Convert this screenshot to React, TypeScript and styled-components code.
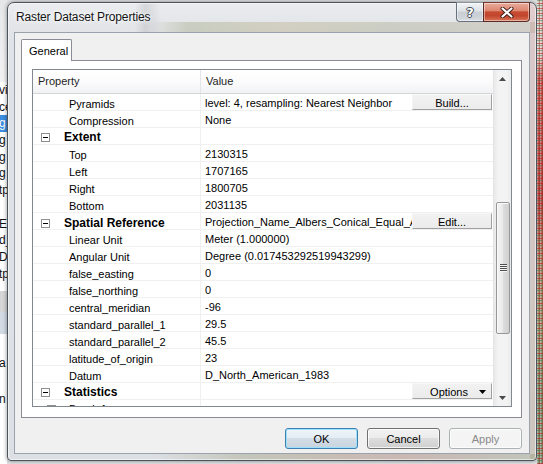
import React from "react";
import styled, { createGlobalStyle } from "styled-components";

const FONT = `"Liberation Sans", Arial, sans-serif`;

const GlobalStyle = createGlobalStyle`
  html, body { margin: 0; padding: 0; }
  body {
    width: 543px; height: 464px; overflow: hidden;
    font-family: ${FONT}; font-size: 11px; color: #000;
  }
  *, *::before, *::after { box-sizing: border-box; }
`;

const Desktop = styled.div`
  display: flex;
  align-items: flex-start;
  width: 543px;
  height: 464px;
  overflow: hidden;
  background: #e2e3e5;
`;

/* ---------- background window strip on the left ---------- */
const LeftStrip = styled.div`
  width: 7px;
  height: 464px;
  flex: none;
  display: flex;
  flex-direction: column;
  overflow: hidden;
  background: #fff;
`;

const StripRow = styled.div<{ $h: number; $bg?: string; $color?: string }>`
  height: ${(p) => p.$h}px;
  flex: none;
  background: ${(p) => p.$bg ?? "#fff"};
  color: ${(p) => p.$color ?? "#111"};
  font-size: 12px;
  line-height: ${(p) => p.$h}px;
  white-space: nowrap;
  text-indent: -1px;
`;

/* ---------- map visible on the right ---------- */
const RightStrip = styled.div`
  width: 6px;
  height: 464px;
  flex: none;
  background:
    repeating-linear-gradient(0deg, rgba(190, 20, 20, 0.55) 0 1px, transparent 1px 3px, rgba(60, 110, 60, 0.45) 3px 4px, transparent 4px 5px),
    repeating-linear-gradient(90deg, rgba(255, 255, 255, 0.3) 0 1px, transparent 1px 2px, rgba(120, 20, 20, 0.35) 2px 3px),
    linear-gradient(180deg, #cfcfc4 0px, #d6c8c0 55px, #c8605a 80px, #b44c48 200px, #a98a6c 260px, #9c9a78 330px, #7d9070 400px, #8a9a7c 464px);
`;

/* ---------- the dialog window ---------- */
const Window = styled.div`
  width: 530px;
  height: 459px;
  margin-top: 2px;
  flex: none;
  display: flex;
  flex-direction: column;
  padding: 0 6px 6px 6px;
  border: 1px solid #4b535d;
  border-radius: 7px 7px 4px 4px;
  box-shadow: inset 0 0 0 1px rgba(255, 255, 255, 0.55), 0 0 4px rgba(0, 0, 0, 0.45);
  background:
    linear-gradient(90deg, rgba(255,255,255,0) 0 24%, rgba(120,120,120,0.18) 26%, rgba(255,255,255,0) 29%) 0 0 / 100% 30px no-repeat,
    linear-gradient(90deg, rgba(255,255,255,0) 0 27%, rgba(140,150,100,0.30) 34%, rgba(175,160,110,0.32) 52%, rgba(150,150,110,0.30) 72%, rgba(165,150,120,0.28) 100%) 0 19px / 100% 11px no-repeat,
    linear-gradient(90deg, rgba(255,255,255,0) 0 28%, rgba(150,150,110,0.35) 45%, rgba(170,110,90,0.35) 75%, rgba(140,150,110,0.35) 100%) 0 100% / 100% 6px no-repeat,
    linear-gradient(180deg, rgba(210,150,150,0.35), rgba(170,150,120,0.35)) 100% 0 / 6px 100% no-repeat,
    linear-gradient(180deg, #eaecef 0%, #dfe2e6 8%, #dcdfe3 100%);
`;

const TitleBar = styled.div`
  height: 29px;
  flex: none;
  display: flex;
  align-items: flex-start;
`;

const Title = styled.div`
  padding: 6px 0 0 2px;
  font-size: 12px;
  line-height: 16px;
  letter-spacing: -0.15px;
  color: #141414;
  text-shadow: 0 0 6px #fff, 0 0 3px #fff;
`;

const CaptionGroup = styled.div`
  display: flex;
  margin-left: auto;
  margin-top: -1px;
`;

const CaptionButton = styled.div<{ $variant: "help" | "close" }>`
  height: 20px;
  width: ${(p) => (p.$variant === "close" ? 47 : 27)}px;
  display: flex;
  align-items: center;
  justify-content: center;
  border: 1px solid ${(p) => (p.$variant === "close" ? "#5b2b24" : "#66707d")};
  border-top-color: ${(p) => (p.$variant === "close" ? "#7a3a30" : "#8a929c")};
  ${(p) => (p.$variant === "help" ? "border-right: none;" : "")}
  border-radius: ${(p) => (p.$variant === "close" ? "0 0 4px 0" : "0 0 0 4px")};
  box-shadow: inset 0 0 0 1px rgba(255, 255, 255, 0.45);
  background: ${(p) =>
    p.$variant === "close"
      ? "linear-gradient(180deg, #e9ab9c 0%, #dd8670 42%, #c84a31 50%, #c2452d 70%, #d87458 100%)"
      : "linear-gradient(180deg, #f1f3f5 0%, #dde1e6 45%, #c9ced5 50%, #cdd2d9 80%, #dce0e5 100%)"};
`;

const HelpGlyph = styled.span`
  font-family: "DejaVu Sans", ${FONT};
  font-weight: bold;
  font-size: 13px;
  line-height: 13px;
  color: #fff;
  text-shadow: 1px 0 0 #3d4550, -1px 0 0 #3d4550, 0 1px 0 #3d4550, 0 -1px 0 #3d4550;
`;

/* ---------- client area ---------- */
const Client = styled.div`
  flex: 1;
  display: flex;
  flex-direction: column;
  padding: 6px 7px 0 6px;
  background: #f0f0f0;
  border: 1px solid #9aa3ad;
`;

const TabStrip = styled.div`
  display: flex;
  flex: none;
`;

const Tab = styled.div`
  position: relative;
  z-index: 1;
  width: 51px;
  height: 22px;
  margin-bottom: -1px;
  padding: 4px 0 0 7px;
  border: 1px solid #898c95;
  border-bottom: none;
  border-radius: 2px 2px 0 0;
  background: #fff;
  font-size: 11px;
  line-height: 14px;
`;

const Panel = styled.div`
  flex: none;
  height: 358px;
  display: flex;
  padding: 8px 9px 10px 10px;
  border: 1px solid #898c95;
  background: #fff;
`;

const Grid = styled.div`
  flex: 1;
  display: flex;
  border: 1px solid #828790;
  overflow: hidden;
`;

const Body = styled.div`
  flex: 1;
  min-width: 0;
  display: flex;
  flex-direction: column;
  overflow: hidden;
`;

const HeaderRow = styled.div`
  flex: none;
  height: 24px;
  display: grid;
  grid-template-columns: 168px 1fr;
  border-bottom: 1px solid #d5d5d5;
  background: linear-gradient(180deg, #ffffff 0%, #fbfbfc 50%, #f1f2f4 100%);
`;

const HeaderCell = styled.div<{ $first?: boolean }>`
  padding: 4px 0 0 5px;
  line-height: 15px;
  color: #1e1e1e;
  ${(p) => (p.$first ? "border-right: 1px solid #e3e5e8;" : "")}
`;

const Row = styled.div`
  flex: none;
  height: 17px;
  display: grid;
  grid-template-columns: 168px 1fr;
  border-bottom: 1px solid #f0f0f0;
`;

const NameCell = styled.div<{ $kind: "item" | "group" | "sub" }>`
  display: flex;
  align-items: center;
  padding-left: ${(p) => (p.$kind === "item" ? 36 : p.$kind === "group" ? 8 : 14)}px;
  border-right: 1px solid #f0f0f0;
  white-space: nowrap;
  overflow: hidden;
`;

const NameText = styled.span<{ $bold?: boolean }>`
  font-size: ${(p) => (p.$bold ? 12 : 11)}px;
  font-weight: ${(p) => (p.$bold ? "bold" : "normal")};
  line-height: 16px;
  padding-top: 2px;
`;

const ExpandBox = styled.span<{ $gap: number }>`
  flex: none;
  width: 9px;
  height: 9px;
  margin: 3px ${(p) => p.$gap}px 0 0;
  border: 1px solid #8e8f8f;
  background: #fff;
  display: flex;
  align-items: center;
  justify-content: center;
  &::after {
    content: "";
    width: 5px;
    height: 1px;
    background: #000;
  }
`;

const ValueCell = styled.div`
  display: flex;
  min-width: 0;
  padding-right: 1px;
`;

const ValueText = styled.span`
  flex: 1;
  min-width: 0;
  overflow: hidden;
  white-space: nowrap;
  padding: 2px 0 0 4px;
  line-height: 15px;
`;

const CellButton = styled.div<{ $menu?: boolean }>`
  flex: none;
  width: 80px;
  height: 16px;
  display: flex;
  align-items: center;
  justify-content: ${(p) => (p.$menu ? "flex-end" : "center")};
  gap: 11px;
  padding: ${(p) => (p.$menu ? "1px 5px 0 0" : "1px 0 0 0")};
  border-top: 1px solid #f8f8f8;
  border-left: 1px solid #f4f4f4;
  border-right: 1px solid #a0a0a0;
  border-bottom: 1px solid #a0a0a0;
  background: linear-gradient(180deg, #f2f2f2 0%, #ebebeb 100%);
  line-height: 14px;
`;

/* ---------- scrollbar ---------- */
const ScrollBar = styled.div`
  width: 18px;
  flex: none;
  display: flex;
  flex-direction: column;
  border-left: 1px solid #e4e4e4;
  background: linear-gradient(90deg, #e9e9e9 0%, #f3f3f3 25%, #f3f3f3 75%, #ebebeb 100%);
`;

const ArrowButton = styled.div`
  height: 17px;
  flex: none;
  display: flex;
  align-items: center;
  justify-content: center;
`;

const Track = styled.div`
  flex: 1;
  display: flex;
  flex-direction: column;
`;

const Thumb = styled.div`
  height: 132px;
  margin: 115px 1px 0 2px;
  display: flex;
  align-items: center;
  justify-content: center;
  border: 1px solid #979797;
  border-radius: 2px;
  box-shadow: inset 1px 1px 0 #fbfbfb;
  background: linear-gradient(90deg, #f4f4f4 0%, #eaeaea 45%, #dbdbdb 55%, #d0d0d0 100%);
`;

const Grip = styled.div`
  width: 7px;
  height: 8px;
  background: repeating-linear-gradient(180deg, #4f4f4f 0 1px, #f6f6f6 1px 2px);
`;

/* ---------- footer ---------- */
const Footer = styled.div`
  flex: none;
  display: flex;
  justify-content: flex-end;
  gap: 9px;
  margin-top: 10px;
`;

const DialogButton = styled.button<{ $default?: boolean }>`
  width: 73px;
  height: 21px;
  padding: 0;
  font-family: ${FONT};
  font-size: 11px;
  color: #000;
  border: 1px solid ${(p) => (p.$default ? "#3c7fb1" : "#707070")};
  border-radius: 3px;
  background: ${(p) =>
    p.$default
      ? "linear-gradient(180deg, #eef5fa 0%, #e4edf4 49%, #d3dde6 50%, #c8d4de 100%)"
      : "linear-gradient(180deg, #f2f2f2 0%, #ebebeb 49%, #dddddd 50%, #cfcfcf 100%)"};
  box-shadow: inset 0 0 0 1px ${(p) => (p.$default ? "#9ee0fb" : "rgba(255,255,255,0.75)")};
  &:disabled {
    border-color: #adb2b5;
    background: #f4f4f4;
    color: #8a8a8a;
    box-shadow: inset 0 0 0 1px #fcfcfc;
  }
`;

type RowData = {
  kind: "item" | "group" | "sub";
  name: string;
  value?: string;
  button?: "Build..." | "Edit..." | "Options";
};

const rows: RowData[] = [
  { kind: "item", name: "Pyramids", value: "level: 4, resampling: Nearest Neighbor", button: "Build..." },
  { kind: "item", name: "Compression", value: "None" },
  { kind: "group", name: "Extent" },
  { kind: "item", name: "Top", value: "2130315" },
  { kind: "item", name: "Left", value: "1707165" },
  { kind: "item", name: "Right", value: "1800705" },
  { kind: "item", name: "Bottom", value: "2031135" },
  { kind: "group", name: "Spatial Reference", value: "Projection_Name_Albers_Conical_Equal_Area", button: "Edit..." },
  { kind: "item", name: "Linear Unit", value: "Meter (1.000000)" },
  { kind: "item", name: "Angular Unit", value: "Degree (0.017453292519943299)" },
  { kind: "item", name: "false_easting", value: "0" },
  { kind: "item", name: "false_northing", value: "0" },
  { kind: "item", name: "central_meridian", value: "-96" },
  { kind: "item", name: "standard_parallel_1", value: "29.5" },
  { kind: "item", name: "standard_parallel_2", value: "45.5" },
  { kind: "item", name: "latitude_of_origin", value: "23" },
  { kind: "item", name: "Datum", value: "D_North_American_1983" },
  { kind: "group", name: "Statistics", button: "Options" },
  { kind: "sub", name: "Band_1" },
  { kind: "item", name: "Build Parameters", value: "skipped columns:1, rows:1" },
];

const stripRows: { h: number; text?: string; bg?: string; color?: string }[] = [
  { h: 82, bg: "linear-gradient(180deg,#e6e7e9,#f2f2f3)" },
  { h: 16.7, text: "vi" },
  { h: 16.7, text: "ce" },
  { h: 16.7, text: "g", bg: "#3b8de0", color: "#fff" },
  { h: 16.7, text: "g" },
  { h: 16.7, text: "g" },
  { h: 16.7, text: "g" },
  { h: 16.7, text: "tp" },
  { h: 16.7 },
  { h: 16.7, text: "ET" },
  { h: 16.7, text: "d_" },
  { h: 16.7, text: "D" },
  { h: 16.7, text: "tp" },
  { h: 8.6 },
  { h: 21, bg: "#d6d6d6" },
  { h: 22, bg: "#d2dae3" },
  { h: 21 },
  { h: 16, text: "a" },
  { h: 20 },
  { h: 16, text: "n" },
  { h: 60 },
];

const UpArrow = () => (
  <svg width="7" height="4" viewBox="0 0 7 4">
    <polygon points="0,4 7,4 3.5,0" fill="#4a4a4a" />
  </svg>
);
const DownArrow = ({ color = "#4a4a4a" }: { color?: string }) => (
  <svg width="7" height="4" viewBox="0 0 7 4">
    <polygon points="0,0 7,0 3.5,4" fill={color} />
  </svg>
);
const CloseX = () => (
  <svg width="14" height="11" viewBox="0 0 14 11">
    <path d="M2.5 1.5 L11.5 9.5 M11.5 1.5 L2.5 9.5" stroke="#3a1a14" strokeWidth="4" strokeLinecap="round" />
    <path d="M2.5 1.5 L11.5 9.5 M11.5 1.5 L2.5 9.5" stroke="#fff" strokeWidth="2.2" strokeLinecap="round" />
  </svg>
);

export default function App() {
  return (
    <>
      <GlobalStyle />
      <Desktop>
        <LeftStrip>
          {stripRows.map((r, i) => (
            <StripRow key={i} $h={r.h} $bg={r.bg} $color={r.color}>
              {r.text ?? ""}
            </StripRow>
          ))}
        </LeftStrip>
        <Window>
          <TitleBar>
            <Title>Raster Dataset Properties</Title>
            <CaptionGroup>
              <CaptionButton $variant="help">
                <HelpGlyph>?</HelpGlyph>
              </CaptionButton>
              <CaptionButton $variant="close">
                <CloseX />
              </CaptionButton>
            </CaptionGroup>
          </TitleBar>
          <Client>
            <TabStrip>
              <Tab>General</Tab>
            </TabStrip>
            <Panel>
              <Grid>
                <Body>
                  <HeaderRow>
                    <HeaderCell $first>Property</HeaderCell>
                    <HeaderCell>Value</HeaderCell>
                  </HeaderRow>
                  {rows.map((r, i) => (
                    <Row key={i}>
                      <NameCell $kind={r.kind}>
                        {r.kind !== "item" && <ExpandBox $gap={r.kind === "group" ? 14 : 13} />}
                        <NameText $bold={r.kind === "group"}>{r.name}</NameText>
                      </NameCell>
                      <ValueCell>
                        <ValueText>{r.value ?? ""}</ValueText>
                        {r.button && (
                          <CellButton $menu={r.button === "Options"}>
                            {r.button}
                            {r.button === "Options" && <DownArrow color="#000" />}
                          </CellButton>
                        )}
                      </ValueCell>
                    </Row>
                  ))}
                </Body>
                <ScrollBar>
                  <ArrowButton>
                    <UpArrow />
                  </ArrowButton>
                  <Track>
                    <Thumb>
                      <Grip />
                    </Thumb>
                  </Track>
                  <ArrowButton>
                    <DownArrow />
                  </ArrowButton>
                </ScrollBar>
              </Grid>
            </Panel>
            <Footer>
              <DialogButton $default>OK</DialogButton>
              <DialogButton>Cancel</DialogButton>
              <DialogButton disabled>Apply</DialogButton>
            </Footer>
          </Client>
        </Window>
        <RightStrip />
      </Desktop>
    </>
  );
}
